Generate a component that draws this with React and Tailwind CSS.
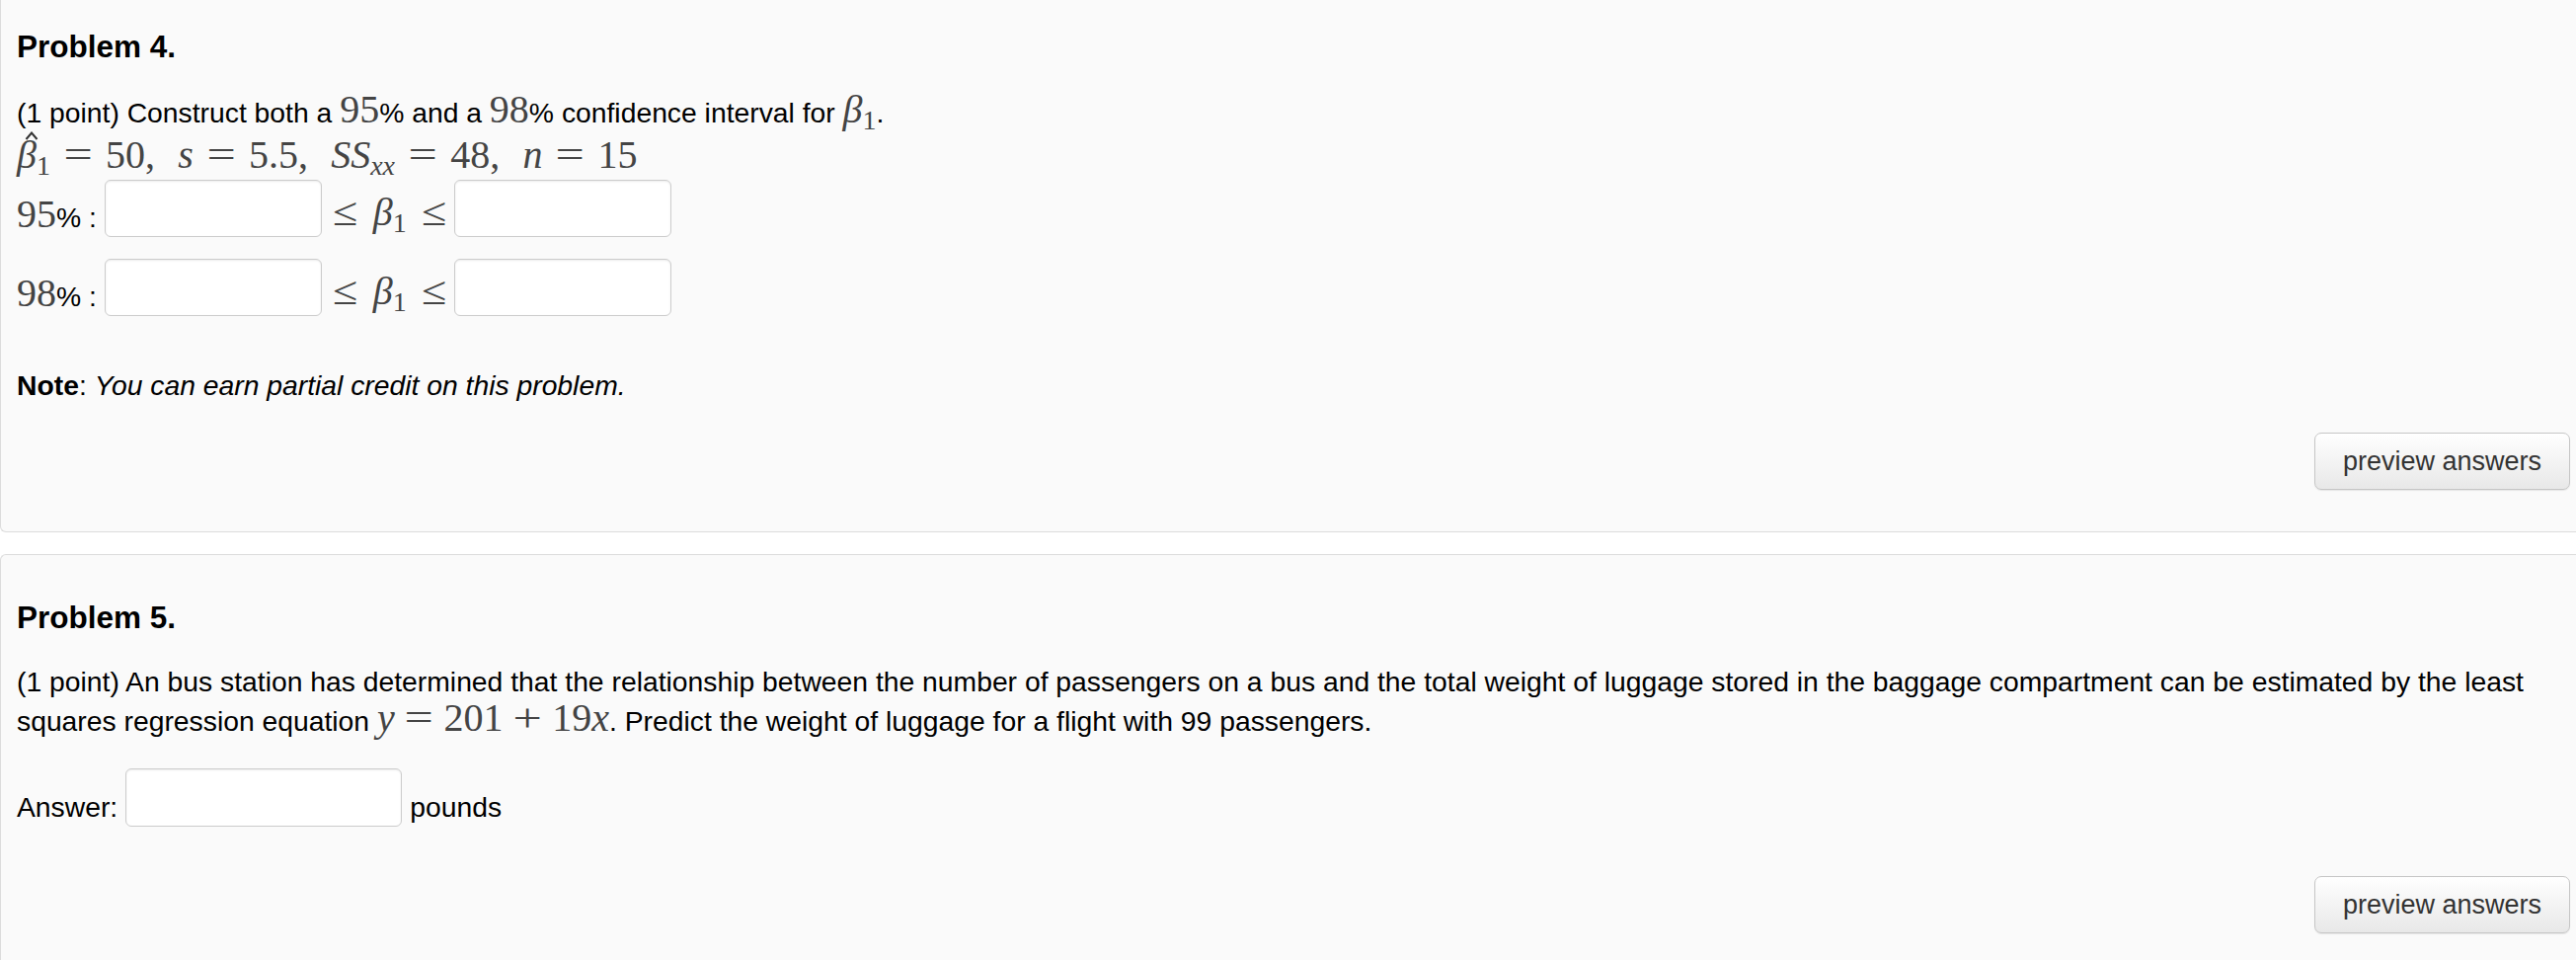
import React from "react";

const serif = { fontFamily: '"Liberation Serif", "DejaVu Serif", serif' };

function M({ children, className = "" }) {
  return (
    <span
      className={`text-[40px] leading-[0px] text-[#444] ${className}`}
      style={serif}
    >
      {children}
    </span>
  );
}

function Sub({ children, italic = false }) {
  return (
    <sub className={`text-[28px] ${italic ? "italic" : ""}`}>{children}</sub>
  );
}

function Eq({ children = "=", gap = "mx-[0.42em]" }) {
  return <span className={`inline-block scale-x-[1.3] ${gap}`}>{children}</span>;
}

function Comma() {
  return <span className="mr-[0.58em]">,</span>;
}

function Beta() {
  return (
    <>
      <span className="italic">β</span>
      <Sub>1</Sub>
    </>
  );
}

function Field({ w = "w-[220px]", h = "h-[58px]" }) {
  return (
    <input
      type="text"
      className={`${w} ${h} shrink-0 rounded-[6px] border border-[#cccccc] bg-white shadow-[inset_0_1px_2px_rgba(0,0,0,0.08)] outline-none`}
    />
  );
}

function PreviewButton() {
  return (
    <div className="flex justify-end pr-[6px]">
      <button className="flex h-[58px] w-[259px] items-center justify-center rounded-[7px] border border-[#c6c6c6] bg-gradient-to-b from-white to-[#e8e8e8] text-[27px] text-[#333] shadow-[0_1px_1px_rgba(0,0,0,0.08)]">
        preview answers
      </button>
    </div>
  );
}

function IntervalRow({ pct, className = "" }) {
  return (
    <div className={`flex items-end ${className}`}>
      <span className="mr-[8px] leading-[40px]">
        <M>{pct}</M>% :
      </span>
      <Field />
      <span
        className="ml-[13px] mr-[9px] mb-[2px] flex items-baseline gap-[17px] text-[40px] leading-[46px] text-[#444]"
        style={serif}
      >
        <span className="inline-block scale-x-[1.15]">≤</span>
        <span>
          <Beta />
        </span>
        <span className="inline-block scale-x-[1.15]">≤</span>
      </span>
      <Field />
    </div>
  );
}

export default function App() {
  return (
    <div
      className="h-[972px] w-[2609px] overflow-hidden bg-white text-[28.3px] leading-[40px] text-black"
      style={{ fontFamily: '"Liberation Sans", Arial, sans-serif' }}
    >
      {/* Problem 4 */}
      <div className="rounded-bl-[6px] border-b border-l border-[#dcdcdc] bg-[#fafafa] pb-[42px] pl-[16px] pt-[27px]">
        <h3 className="text-[31.5px] font-bold leading-[40px]">Problem 4.</h3>
        <p className="mt-[27px]">
          (1 point) Construct both a <M>95</M>% and a <M>98</M>% confidence
          interval for{" "}
          <M>
            <Beta />
          </M>
          .
        </p>
        <div className="text-[40px] leading-[46px] text-[#444]" style={serif}>
          <span className="relative inline-block italic">
            β
            {/* hat accent */}
            <svg
              className="absolute left-[8px] top-[-1px] z-10"
              width="14"
              height="9"
              viewBox="0 0 14 9"
            >
              <polyline
                points="1.5,8 7,1.5 12.5,8"
                fill="none"
                stroke="#333"
                strokeWidth="2"
              />
            </svg>
          </span>
          <Sub>1</Sub>
          <Eq />
          50
          <Comma />
          <span className="italic">s</span>
          <Eq />
          5.5
          <Comma />
          <span className="italic">SS</span>
          <Sub italic>xx</Sub>
          <Eq />
          48
          <Comma />
          <span className="italic">n</span>
          <Eq />
          15
        </div>
        <IntervalRow pct="95" className="mt-[2px]" />
        <IntervalRow pct="98" className="mt-[22px]" />
        <p className="mt-[50px]">
          <b>Note</b>: <i>You can earn partial credit on this problem.</i>
        </p>
        <div className="mt-[28px]">
          <PreviewButton />
        </div>
      </div>

      {/* Problem 5 */}
      <div className="mt-[22px] rounded-tl-[6px] border-l border-t border-[#dcdcdc] bg-[#fafafa] pb-[40px] pl-[16px] pt-[43px]">
        <h3 className="text-[31.5px] font-bold leading-[40px]">Problem 5.</h3>
        <p className="mt-[25px]">
          (1 point) An bus station has determined that the relationship between
          the number of passengers on a bus and the total weight of luggage
          stored in the baggage compartment can be estimated by the least
          <br />
          squares regression equation{" "}
          <M>
            <span className="italic">y</span>
            <Eq gap="mx-[0.34em]" />
            201
            <Eq gap="mx-[0.34em]">+</Eq>
            19<span className="italic">x</span>
          </M>
          . Predict the weight of luggage for a flight with 99 passengers.
        </p>
        <div className="mt-[28px] flex items-end">
          <span className="mr-[8px] leading-[40px]">Answer:</span>
          <Field w="w-[280px]" h="h-[59px]" />
          <span className="ml-[8px] leading-[40px]">pounds</span>
        </div>
        <div className="mt-[50px]">
          <PreviewButton />
        </div>
      </div>
    </div>
  );
}
